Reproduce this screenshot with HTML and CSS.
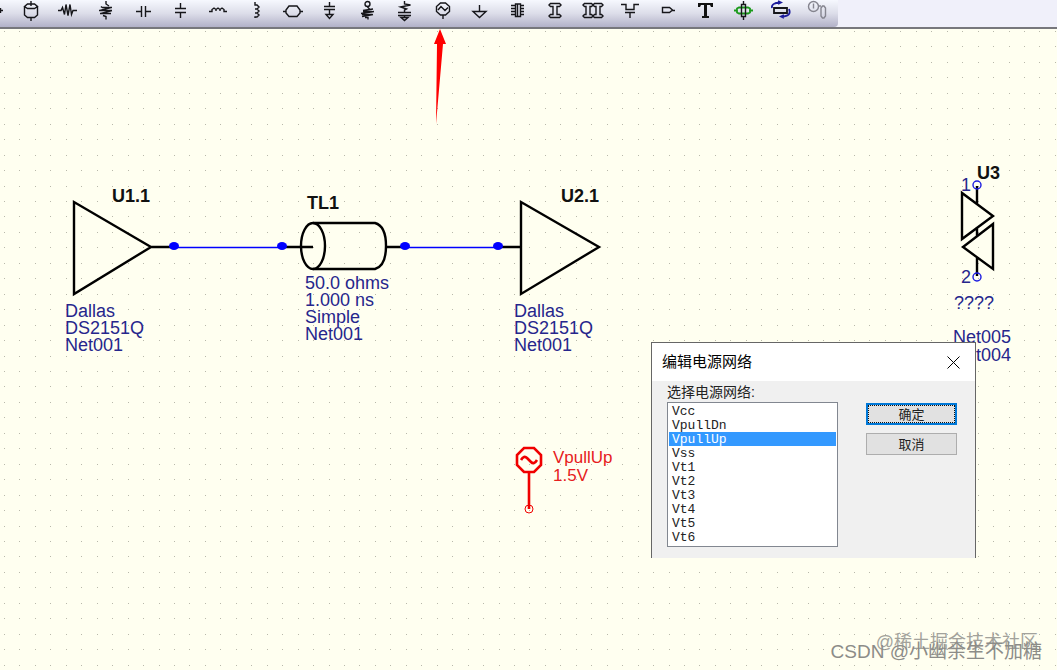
FILE: index.html
```
<!DOCTYPE html>
<html lang="zh-CN">

<head>
    <meta charset="UTF-8">
    <meta name="viewport" content="width=device-width, initial-scale=1.0">
    <title>编辑电源网络</title>
    <link rel="stylesheet" href="styles.css">
</head>

<body>
    <header class="toolbar">
        <div class="tools">
            <button class="tool cut" aria-label="pin"><svg viewBox="0 0 12 22"><path d="M0 10.500h3M.500 8v5" /></svg></button>
            <button class="tool" aria-label="driver"><svg viewBox="0 0 24 22"><path d="M12 1v5M12 17v4M5.500 6.500l3-2.500h7l3 2.500l-3 2h-7zM5.500 7v8l3 2.500h7l3-2.500V7" /></svg></button>
            <button class="tool" aria-label="resistor"><svg viewBox="0 0 24 22"><path d="M1 10.500h3l1.500-3l2 7l1.500-10l2 11l2-11l1.500 10l1.500-4h4" /></svg></button>
            <button class="tool" aria-label="vertical resistor"><svg viewBox="0 0 24 22"><path d="M12 1v3l3 2M8 7.500h10M5 10.500h13M6 13.500h11M9 15.500l3 1v3M8 7.500l-1-1M17 7.500l-11 3M18 10.500l-11 3" /></svg></button>
            <button class="tool" aria-label="capacitor"><svg viewBox="0 0 24 22"><path d="M4 11.500h5M9.500 6v11M13.500 6v11M14 11.500h5" /></svg></button>
            <button class="tool" aria-label="vertical capacitor"><svg viewBox="0 0 24 22"><path d="M11.500 3v5M6 8.500h11M6 12.500h11M11.500 13v5" /></svg></button>
            <button class="tool" aria-label="inductor"><svg viewBox="0 0 24 22"><path d="M2 11.500h3V9.500l2-1.500l2 1.500v1.500V9.500l2-1.500l2 1.500v1.500V9.500l2-1.500l2 1.500v2h3" /></svg></button>
            <button class="tool" aria-label="vertical inductor"><svg viewBox="0 0 24 22"><path d="M11 2v3h2l2 2l-2 2h-2h2l2 2l-2 2h-2h2l2 2l-2 2h-2v1" /></svg></button>
            <button class="tool" aria-label="ferrite bead"><svg viewBox="0 0 24 22"><path d="M1 11.500h3M18 11.500h3M4 10l3-4h8l3 4v3l-3 3.500H7l-3-3.500z" /></svg></button>
            <button class="tool" aria-label="capacitor to ground"><svg viewBox="0 0 24 22"><path d="M10.500 2v4M5 6.500h11M5 9.500h11M10.500 10v5M7 14.500h7l-3.500 4z" /></svg></button>
            <button class="tool" aria-label="resistor to supply"><svg viewBox="0 0 24 22"><circle cx="10.500" cy="4" r="2.500" /><path d="M10.500 7l2 2M6 10.500l10-1.500M4 13.500l13-2M5 16.500l11-2M6 11.500h9M5 14.500h10M8 17.500h3v2" /></svg></button>
            <button class="tool" aria-label="resistor to ground"><svg viewBox="0 0 24 22"><path d="M10.500 1v3l6 1l-10 2l6 2l-2 1v2M4 12.500h13M4 15.500h13M10.500 16v2M7 17.500h7l-3.500 3z" /></svg></button>
            <button class="tool" aria-label="power supply"><svg viewBox="0 0 24 22"><path d="M8.500 3h5l4 3.500v5l-4 3.500h-5l-4-3.500v-5zM11 15v4M6 10l3-3.500l4 4l3-3" /></svg></button>
            <button class="tool" aria-label="ground"><svg viewBox="0 0 24 22"><path d="M10.500 5v6M4 11.500h13l-6.500 6z" /></svg></button>
            <button class="tool" aria-label="ic"><svg viewBox="0 0 24 22"><path d="M8.500 4h5v12.500h-5zM10.500 4v12M4 5.500h4M4 8.500h4M4 11.500h4M4 14.500h4M14 5.500h3M14 8.500h3M14 11.500h3M14 14.500h3" /></svg></button>
            <button class="tool" aria-label="via"><svg viewBox="0 0 24 22"><path d="M6.500 3.500h9l1.500 1.500l-1.500 1.500H13v8h2.500l1.500 1.500l-1.500 1.500h-9L5 16l1.500-1.500H9v-8H6.500L5 5z" /></svg></button>
            <button class="tool" aria-label="differential via"><svg viewBox="0 0 24 22"><path d="M2.500 3.500h7l1.500 1.500l-1.500 1.500H8v8h1.500l1.500 1.500l-1.500 1.500h-7L1 16l1.500-1.500H4v-8H2.500L1 5zM12.500 3.500h7l1.500 1.500l-1.500 1.500H18v8h1.500l1.500 1.500l-1.500 1.500h-7L11 16l1.500-1.500H14v-8h-1.500L11 5z" /></svg></button>
            <button class="tool" aria-label="mosfet"><svg viewBox="0 0 24 22"><path d="M2 4.500h5v5h8v-5h5M6 12.500h10M11 13v5" /></svg></button>
            <button class="tool" aria-label="connector"><svg viewBox="0 0 24 22"><path d="M5.500 7.500h7l3 2.500l-3 2.500h-7zM15 10.500h3" /></svg></button>
            <button class="tool" aria-label="text"><svg viewBox="0 0 24 22"><path class="solid" d="M4 3h15v4h-2l-1-2h-3v11h2v2H8v-2h2V5H7L6 7H4z" /></svg></button>
            <button class="tool" aria-label="move"><svg viewBox="0 0 24 22"><path class="green" d="M2 10.500h3M17 10.500h4M7 7.500h9l2 1v4l-2 1H7l-2-1v-4z" /><path d="M11.500 1v3M11.500 17v3M9.500 4.500h4v12h-4z" /></svg></button>
            <button class="tool" aria-label="rotate"><svg viewBox="0 0 24 22"><path class="mid" d="M5 8h13v5H5z" /><path class="navy" d="M3 8q-1-5 8-5.500M9 1l3 1.500L9 4M20 9q3 7-7 7.500M15 15l-3 1.500l3 1.500" /></svg></button>
            <button class="tool" aria-label="probe"><svg viewBox="0 0 24 22"><g class="gray"><circle cx="6.500" cy="6.500" r="5" /><path d="M6.500 3.500v5M12 6h2M14 8l1.500-2h1.500l1.500 2v8l-1.500 2h-1.500l-1.500-2z" /></g></svg></button>
        </div>
    </header>

    <main class="sheet">
        <svg class="schematic">
            <defs>
                <!-- 11 dots per 170px -->
                <pattern id="grid" x="4" y="2" width="170" height="170" patternUnits="userSpaceOnUse">
                    <path class="dots" d="M0 .500h170M0 15.500h170M0 31.500h170M0 46.500h170M0 62.500h170M0 77.500h170M0 93.500h170M0 108.500h170M0 124.500h170M0 139.500h170M0 155.500h170" />
                </pattern>
            </defs>
            <rect width="100%" height="100%" fill="url(#grid)" />

            <!-- nets -->
            <path class="net" d="M174 218.500h108M405 218.500h93" />

            <!-- U1.1 -->
            <path class="part" d="M74 173v92l77-47zM151 218h20" />
            <!-- TL1 -->
            <ellipse class="part" cx="313" cy="217" rx="12" ry="23" />
            <path class="part" d="M313 194h62q11 3 11 23t-11 23h-62M285 218h28M386 218h17" />
            <!-- U2.1 -->
            <path class="part" d="M521 173v92l78-47zM500 218h20" />
            <!-- U3 -->
            <path class="part" d="M962 164v46l31-23zM993 195v45l-30-22zM977 157v18M977 198v9M977 228v19" />

            <g class="joint">
                <ellipse cx="174" cy="217" rx="5" ry="4" />
                <ellipse cx="282" cy="217" rx="5" ry="4" />
                <ellipse cx="405" cy="217" rx="5" ry="4" />
                <ellipse cx="498" cy="217" rx="5" ry="4" />
            </g>
            <circle class="pin" cx="977" cy="156" r="4" />
            <circle class="pin" cx="977" cy="248" r="4" />

            <text class="name" x="112" y="173">U1.1</text>
            <text class="name" x="307" y="180">TL1</text>
            <text class="name" x="561" y="173">U2.1</text>
            <text class="name" x="977" y="150">U3</text>

            <text class="info" x="65" y="288">Dallas</text>
            <text class="info" x="65" y="305">DS2151Q</text>
            <text class="info" x="65" y="322">Net001</text>

            <text class="info" x="305" y="260">50.0 ohms</text>
            <text class="info" x="305" y="277">1.000 ns</text>
            <text class="info" x="305" y="294">Simple</text>
            <text class="info" x="305" y="311">Net001</text>

            <text class="info" x="514" y="288">Dallas</text>
            <text class="info" x="514" y="305">DS2151Q</text>
            <text class="info" x="514" y="322">Net001</text>

            <text class="info" x="961" y="162">1</text>
            <text class="info" x="961" y="254">2</text>
            <text class="info" x="954" y="280">????</text>
            <text class="info" x="953" y="314">Net005</text>
            <text class="info" x="953" y="332">Net004</text>

            <!-- supply -->
            <path class="supply" d="M524 419h10l7 7v10l-7 7h-10l-7-7v-10zM529 443v37" />
            <path class="supply" d="M521 431q3-5 6-2l4 4q3 3 6-2" />
            <circle class="supply-pin" cx="529" cy="480" r="4" />
            <text class="power" x="553" y="434">VpullUp</text>
            <text class="power" x="553" y="452">1.5V</text>

            <path class="arrow" d="M440 0l6 15h-3l-7 80l1-80h-3z" />
        </svg>

        <section class="dialog" role="dialog" aria-labelledby="dialog-title">
            <div class="title-bar">
                <h1 id="dialog-title">编辑电源网络</h1>
                <button class="close" aria-label="关闭"><svg viewBox="0 0 13 13"><path d="M.500 .500l12 12M12.500 .500l-12 12" /></svg></button>
            </div>
            <div class="dialog-body">
                <div class="field">
                    <label for="nets">选择电源网络:</label>
                    <select id="nets" size="10">
                        <option>Vcc</option>
                        <option>VpullDn</option>
                        <option selected>VpullUp</option>
                        <option>Vss</option>
                        <option>Vt1</option>
                        <option>Vt2</option>
                        <option>Vt3</option>
                        <option>Vt4</option>
                        <option>Vt5</option>
                        <option>Vt6</option>
                    </select>
                </div>
                <div class="actions">
                    <button class="btn ok">确定</button>
                    <button class="btn">取消</button>
                </div>
            </div>
        </section>

        <p class="mark community">@稀土掘金技术社区</p>
        <p class="mark csdn">CSDN @小幽余生不加糖</p>
    </main>
</body>

</html>
```

FILE: styles.css
```
* {
    box-sizing: border-box;
    margin: 0;
    padding: 0;
}

body {
    display: flex;
    flex-direction: column;
    height: 100vh;
    overflow: hidden;
    font-family: "Liberation Sans", "Noto Sans CJK SC", sans-serif;
    background: #fffff0;
}

/* toolbar */
.toolbar {
    display: flex;
    background: #f0f0fa;
    border-bottom: 2px solid #77777c;
}

.tools {
    display: flex;
    padding: 0 1px 5px 0;
    border-radius: 0 0 4px 0;
    background: linear-gradient(#f6f8fe, #dcdde9 50%, #b2b1c8);
}

.tool {
    display: block;
    width: 37px;
    height: 22px;
    padding-left: 7px;
    border: none;
    background: none;
}

.tool:nth-child(even) {
    width: 38px;
}

.tool.cut {
    width: 12px;
    padding: 0;
}

.tool svg {
    display: block;
    height: 22px;
    fill: none;
    stroke: #16161a;
    stroke-width: 1.4;
}

.tool .mid {
    stroke-width: 1.8;
}

.tool .solid {
    fill: #111;
    stroke: none;
}

.tool .green {
    stroke: #1a9a1a;
    stroke-width: 1.8;
}

.tool .navy {
    stroke: #1c1c9c;
    stroke-width: 1.8;
}

.tool .gray {
    stroke: #85858f;
}

/* drawing sheet */
.sheet {
    position: relative;
    flex: 1;
}

.schematic {
    display: block;
    width: 100%;
    height: 100%;
    fill: none;
}

.dots {
    stroke: #b8b8aa;
    stroke-dasharray: 1 14 1 15 1 14 1 15 1 14 1 15 1 14 1 15 1 14 1 15 1 14;
}

.net {
    stroke: #00f;
    stroke-width: 1.4;
}

.part {
    stroke: #000;
    stroke-width: 2.4;
}

.joint {
    fill: #00f;
}

.pin {
    stroke: #1c1ce0;
    stroke-width: 1.4;
}

.name {
    font-size: 18px;
    font-weight: bold;
    fill: #111;
}

.info {
    font-size: 18px;
    fill: #26268c;
}

.supply {
    stroke: #f00000;
    stroke-width: 2.6;
}

.supply-pin {
    stroke: #f00000;
}

.power {
    font-size: 17px;
    fill: #e62020;
}

.arrow {
    fill: #f00;
}

/* dialog */
.dialog {
    position: absolute;
    left: 651px;
    top: 313px;
    width: 325px;
    background: #f0f0f0;
    border: 1px solid #666;
    border-bottom: none;
}

.title-bar {
    display: flex;
    align-items: center;
    justify-content: space-between;
    height: 38px;
    padding: 0 15px 0 10px;
    background: #fff;
}

.title-bar h1 {
    padding-bottom: 3px;
    font-size: 15px;
    font-weight: normal;
    color: #000;
}

.close {
    border: none;
    background: none;
}

.close svg {
    display: block;
    width: 13px;
    height: 13px;
    stroke: #000;
}

.dialog-body {
    display: flex;
    gap: 28px;
    padding: 2px 18px 11px 15px;
}

.field {
    flex: 1;
}

.field label {
    display: block;
    font-size: 14px;
    line-height: 19px;
    color: #222;
}

.field select {
    display: block;
    width: 100%;
    height: 145px;
    padding: 1px;
    overflow: hidden;
    border: 1px solid #828790;
    border-radius: 0;
    outline: none;
    background: #fff;
    font-family: "Liberation Mono", monospace;
    font-size: 13px;
    color: #222;
}

.field option {
    height: 14px;
    min-height: 14px;
    padding: 0 3px;
    line-height: 14px;
}

.field option:checked {
    background: linear-gradient(#39f, #39f);
    color: #fff;
}

.actions {
    display: flex;
    flex-direction: column;
    gap: 8px;
    width: 91px;
    padding-top: 20px;
}

.btn {
    height: 22px;
    border: 1px solid #adadad;
    background: #e1e1e1;
    font-family: "Noto Sans CJK SC", sans-serif;
    font-size: 13px;
    line-height: 16px;
    color: #222;
}

.btn.ok {
    border: 2px solid #0078d7;
    outline: 1px dotted #111;
    outline-offset: -3px;
}

/* watermarks */
.mark {
    position: absolute;
    white-space: nowrap;
    color: #8c8c88;
}

.community {
    right: 19px;
    bottom: 16px;
    font-size: 18px;
    line-height: 24px;
    opacity: 0.8;
}

.csdn {
    right: 15px;
    bottom: 6px;
    font-size: 19px;
    line-height: 24px;
}
```
